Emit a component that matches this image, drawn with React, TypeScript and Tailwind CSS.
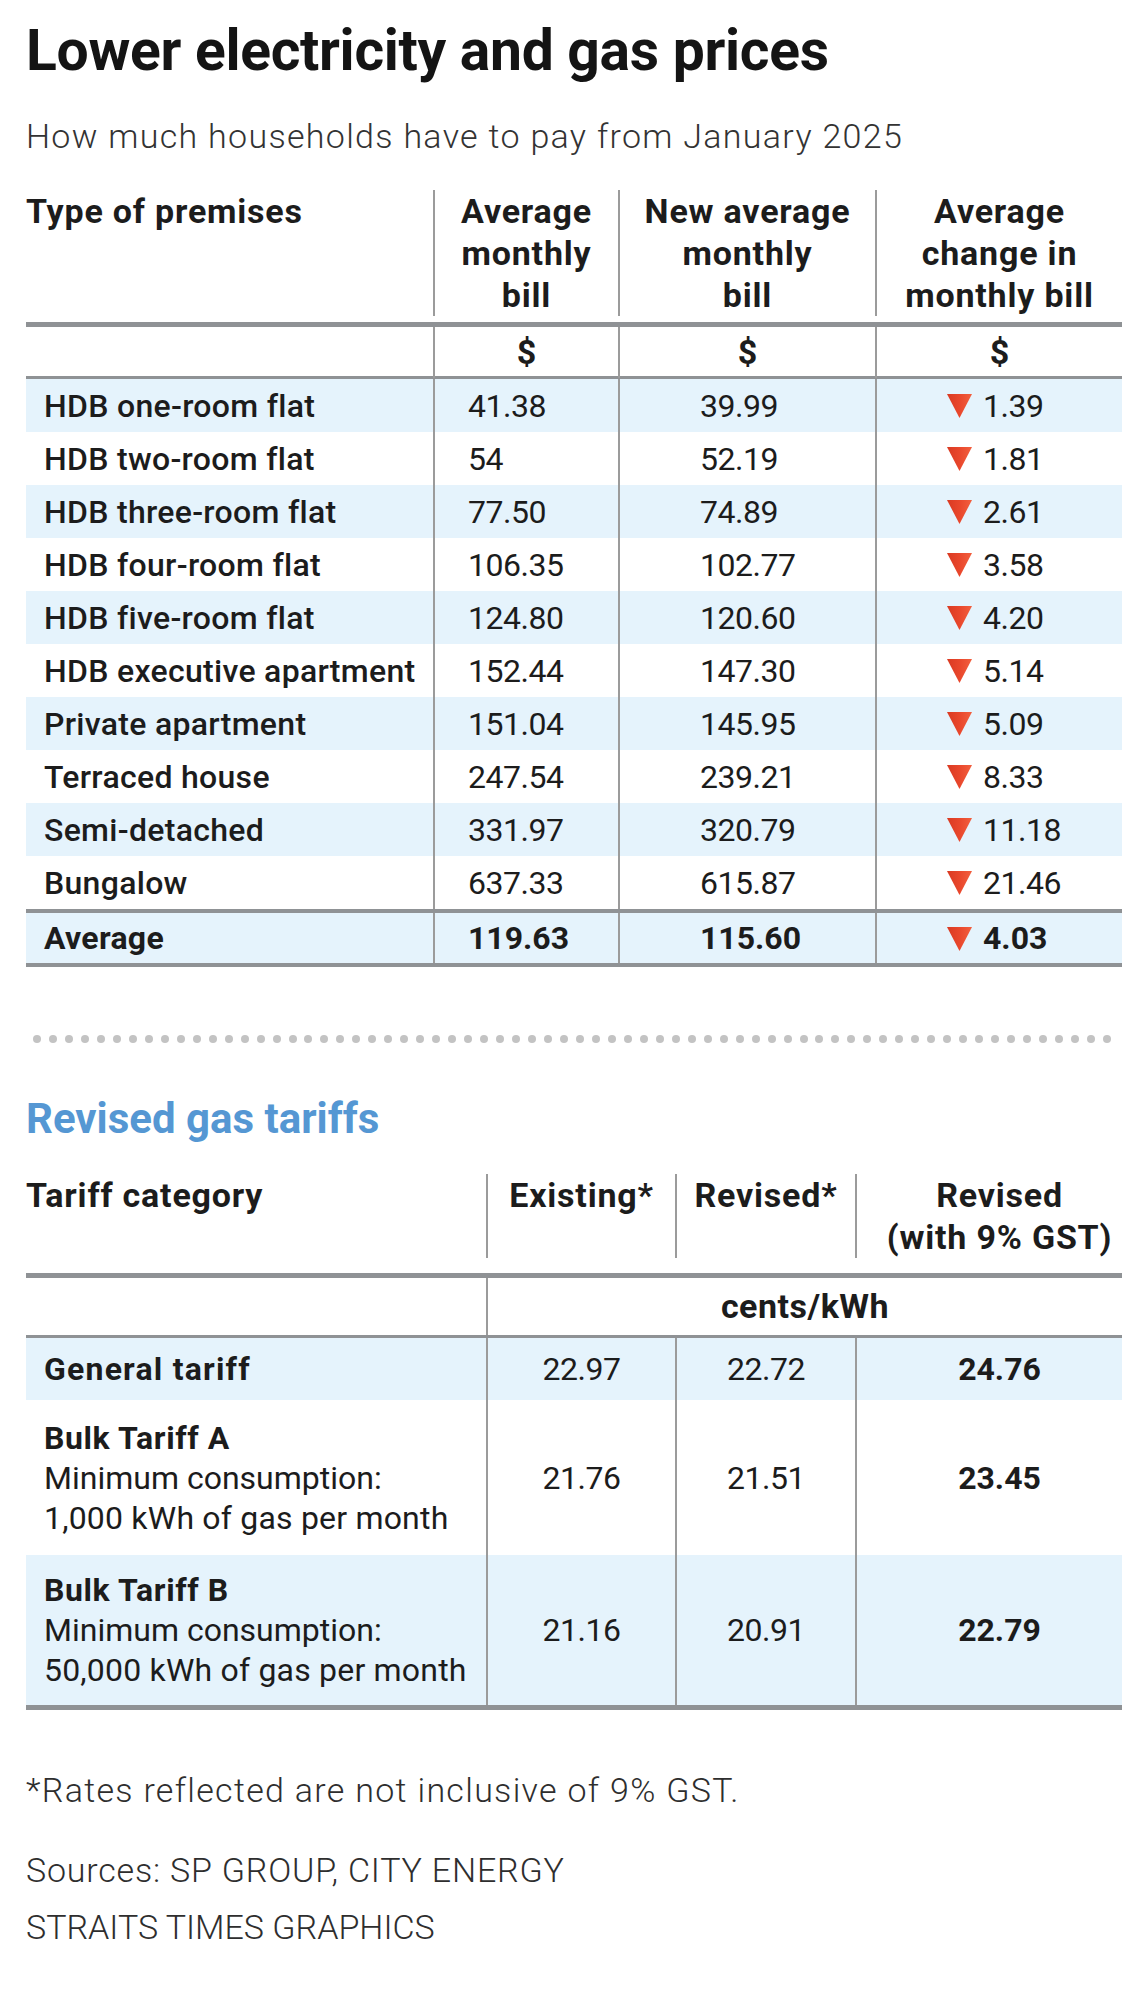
import React from 'react'

const bills = [
  ['HDB one-room flat', '41.38', '39.99', '1.39'],
  ['HDB two-room flat', '54', '52.19', '1.81'],
  ['HDB three-room flat', '77.50', '74.89', '2.61'],
  ['HDB four-room flat', '106.35', '102.77', '3.58'],
  ['HDB five-room flat', '124.80', '120.60', '4.20'],
  ['HDB executive apartment', '152.44', '147.30', '5.14'],
  ['Private apartment', '151.04', '145.95', '5.09'],
  ['Terraced house', '247.54', '239.21', '8.33'],
  ['Semi-detached', '331.97', '320.79', '11.18'],
  ['Bungalow', '637.33', '615.87', '21.46'],
]

const tariffs = [
  { name: 'Bulk Tariff A', min: '1,000 kWh of gas per month', existing: '21.76', revised: '21.51', gst: '23.45' },
  { name: 'Bulk Tariff B', min: '50,000 kWh of gas per month', existing: '21.16', revised: '20.91', gst: '22.79' },
]

function DownTriangle() {
  return (
    <svg width="25" height="25" viewBox="0 0 25 25" className="shrink-0">
      <defs>
        <linearGradient id="tri" x1="0" y1="0" x2="1" y2="0">
          <stop offset="0" stopColor="#d93a22" />
          <stop offset="0.5" stopColor="#e9472c" />
          <stop offset="1" stopColor="#f2603f" />
        </linearGradient>
      </defs>
      <polygon points="0,1 25,1 12.5,25" fill="url(#tri)" />
    </svg>
  )
}

const billCols = 'grid grid-cols-[407px_185px_257px_247px]'
const gasCols = 'grid grid-cols-[460px_189px_180px_267px]'
const divider = 'border-l-2 border-[#9b9b9b]'

function BillRow({ row, shaded }: { row: string[]; shaded: boolean }) {
  return (
    <div className={`${billCols} h-[53px] text-[32px] ${shaded ? 'bg-[#e5f3fc]' : ''}`}>
      <div className="flex items-center pl-[18px] font-medium tracking-[0.3px]">{row[0]}</div>
      <div className={`${divider} flex items-center pl-[33px] tracking-[-0.5px]`}>{row[1]}</div>
      <div className={`${divider} flex items-center pl-[80px] tracking-[-0.5px]`}>{row[2]}</div>
      <div className={`${divider} flex items-center gap-[11px] pl-[70px] tracking-[-0.5px]`}>
        <DownTriangle />
        <span>{row[3]}</span>
      </div>
    </div>
  )
}

export default function App() {
  return (
    <div className="min-h-screen w-[1140px] bg-white text-[#1c1c1c] [font-family:Roboto,'Liberation_Sans',sans-serif]">
      <div className="pl-[26px] pt-[22px]">
        <h1 className="text-[57px] font-bold leading-none tracking-[-0.3px] text-[#141414]">
          Lower electricity and gas prices
        </h1>
        <p className="mt-[40px] text-[34px] font-light leading-none tracking-[1.3px] text-[#333]">
          How much households have to pay from January 2025
        </p>
      </div>

      {/* Electricity bill table */}
      <div className="ml-[26px] mt-[37px] w-[1096px]">
        <div
          className={`${billCols} border-b-[5px] border-[#8f9295] pb-[6px] text-[34px] font-bold leading-[42px] tracking-[0.8px]`}
        >
          <div>Type of premises</div>
          <div className={`${divider} text-center`}>
            Average
            <br />
            monthly
            <br />
            bill
          </div>
          <div className={`${divider} text-center`}>
            New average
            <br />
            monthly
            <br />
            bill
          </div>
          <div className={`${divider} text-center`}>
            Average
            <br />
            change in
            <br />
            monthly bill
          </div>
        </div>
        <div className={`${billCols} h-[52px] border-b-[3px] border-[#8f9295] text-[34px] font-bold`}>
          <div />
          <div className={`${divider} flex items-center justify-center`}>$</div>
          <div className={`${divider} flex items-center justify-center`}>$</div>
          <div className={`${divider} flex items-center justify-center`}>$</div>
        </div>
        {bills.map((row, i) => (
          <BillRow key={row[0]} row={row} shaded={i % 2 === 0} />
        ))}
        <div className={`${billCols} h-[58px] border-y-[4px] border-[#8f9295] bg-[#e5f3fc] text-[32px] font-bold`}>
          <div className="flex items-center pl-[18px] tracking-[0.3px]">Average</div>
          <div className={`${divider} flex items-center pl-[33px]`}>119.63</div>
          <div className={`${divider} flex items-center pl-[80px]`}>115.60</div>
          <div className={`${divider} flex items-center gap-[11px] pl-[70px]`}>
            <DownTriangle />
            <span>4.03</span>
          </div>
        </div>
      </div>

      {/* Dotted separator */}
      <div className="ml-[33px] mt-[68px] flex w-[1078px] justify-between">
        {Array.from({ length: 68 }).map((_, i) => (
          <span key={i} className="size-[8px] rounded-full bg-[#c3c3c3]" />
        ))}
      </div>

      <h2 className="ml-[26px] mt-[55px] text-[42px] font-bold leading-none text-[#5597d3]">Revised gas tariffs</h2>

      {/* Gas tariff table */}
      <div className="ml-[26px] mt-[34px] w-[1096px]">
        <div
          className={`${gasCols} border-b-[5px] border-[#8f9295] pb-[15px] text-[34px] font-bold leading-[42px] tracking-[0.8px]`}
        >
          <div>Tariff category</div>
          <div className={`${divider} text-center`}>Existing*</div>
          <div className={`${divider} text-center`}>Revised*</div>
          <div className={`${divider} pl-[20px] text-center`}>
            Revised
            <br />
            (with 9% GST)
          </div>
        </div>
        <div className={`${gasCols} h-[60px] border-b-[3px] border-[#8f9295] text-[34px] font-bold tracking-[0.5px]`}>
          <div />
          <div className={`${divider} col-span-3 flex items-center justify-center`}>cents/kWh</div>
        </div>
        <div className={`${gasCols} h-[62px] bg-[#e5f3fc] text-[32px]`}>
          <div className="flex items-center pl-[18px] font-bold tracking-[1.2px]">General tariff</div>
          <div className={`${divider} flex items-center justify-center tracking-[-0.5px]`}>22.97</div>
          <div className={`${divider} flex items-center justify-center tracking-[-0.5px]`}>22.72</div>
          <div className={`${divider} flex items-center justify-center pl-[20px] font-bold`}>24.76</div>
        </div>
        {tariffs.map((t, i) => (
          <div
            key={t.name}
            className={`${gasCols} h-[155px] text-[32px] ${i === 1 ? 'border-b-[5px] border-[#8f9295] bg-[#e5f3fc]' : ''}`}
          >
            <div className="flex flex-col justify-center pl-[18px] leading-[40px]">
              <span className="font-bold tracking-[0.6px]">{t.name}</span>
              <span>Minimum consumption:</span>
              <span className="tracking-[0.2px]">{t.min}</span>
            </div>
            <div className={`${divider} flex items-center justify-center tracking-[-0.5px]`}>{t.existing}</div>
            <div className={`${divider} flex items-center justify-center tracking-[-0.5px]`}>{t.revised}</div>
            <div className={`${divider} flex items-center justify-center pl-[20px] font-bold`}>{t.gst}</div>
          </div>
        ))}
      </div>

      <div className="pl-[26px] text-[34px] font-light text-[#2e2e2e]">
        <p className="mt-[63px] leading-none tracking-[1.3px]">*Rates reflected are not inclusive of 9% GST.</p>
        <p className="mt-[35px] leading-[57px]">
          <span className="tracking-[0.8px]">Sources: SP GROUP, CITY ENERGY</span>
          <br />
          <span className="tracking-[0px]">STRAITS TIMES GRAPHICS</span>
        </p>
      </div>
    </div>
  )
}
